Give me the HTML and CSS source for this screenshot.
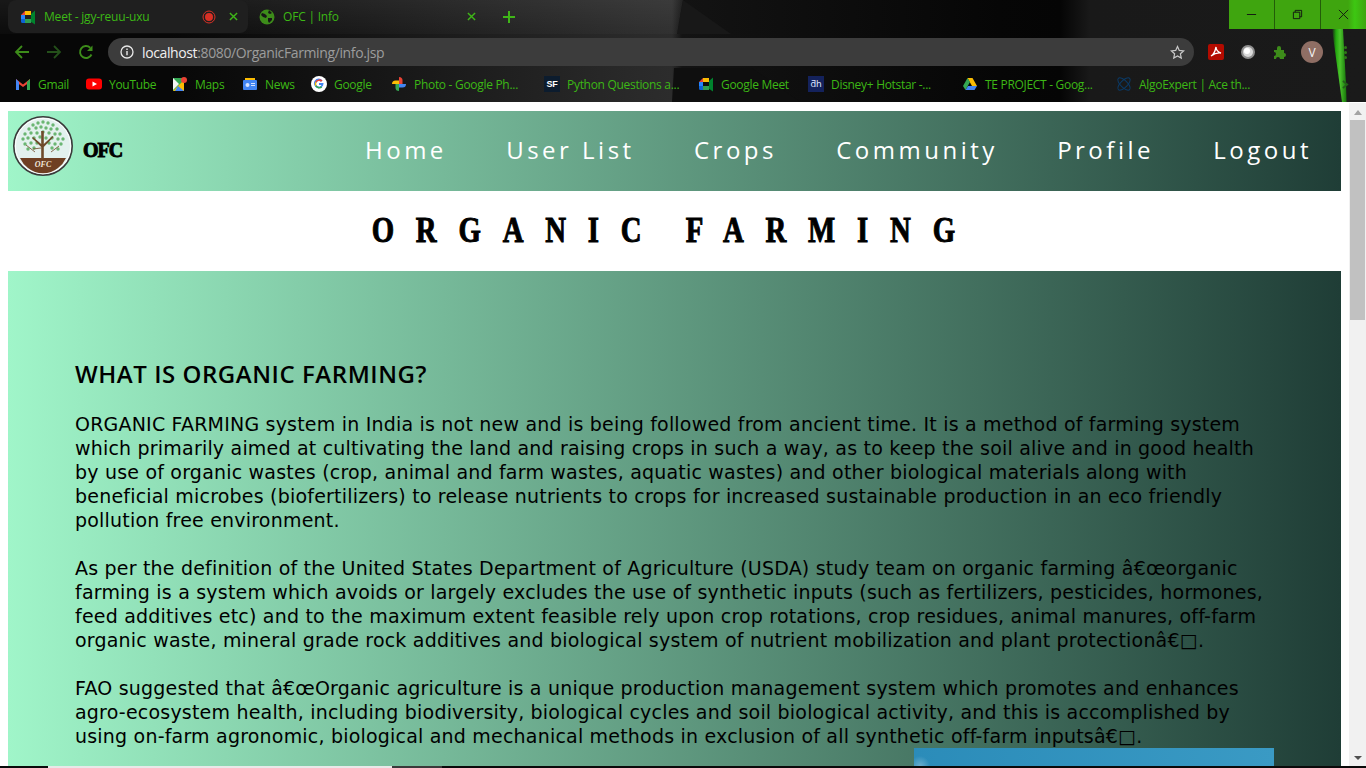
FILE: index.html
```html
<!DOCTYPE html>
<html lang="en">
<head>
<meta charset="utf-8">
<title>OFC | Info</title>
<link rel="stylesheet" href="styles.css">
</head>
<body>
<div class="screen">
  <header class="browser">
    <div class="theme theme-a"></div>
    <div class="theme theme-c"></div>
    <div class="theme theme-b"></div>
    <div class="theme theme-d"></div>
    <div class="theme theme-glow"></div>
    <div class="tabstrip">
      <div class="tab tab-active">
        <svg class="fav" viewBox="0 0 16 16"><path d="M1 6l4-4v4z" fill="#ea4335"/><path d="M5 2h6v4H5z" fill="#fbbc04"/><path d="M1 6h4v4H1z" fill="#2684fc"/><path d="M1 10h4v4H2.500A1.500 1.500 0 0 1 1 12.500z" fill="#0d62d6"/><path d="M5 10h6v4H5z" fill="#2f9e52"/><path d="M11 3.500V13l1 .5 3 2V1.500L11 5z" fill="#00832d"/></svg>
        <span class="tab-title">Meet - jgy-reuu-uxu</span>
        <svg class="rec" viewBox="0 0 14 14"><circle cx="7" cy="7" r="6" fill="none" stroke="#d93025" stroke-width="1"/><circle cx="7" cy="7" r="4" fill="#d93025"/></svg>
        <svg class="tab-x" viewBox="0 0 10 10"><path d="M1 1l8 8M9 1l-8 8" stroke="#3fb618" stroke-width="1.6"/></svg>
      </div>
      <div class="tab tab-idle">
        <svg class="fav" viewBox="0 0 16 16"><circle cx="8" cy="8" r="7.500" fill="#3d8c1a"/><path d="M3 4l3 1 2 2-1 2-3-1-2-2zM10 1l3 3-2 1-2-1zM9 9l4 0 0 2-3 3-1-2z" fill="#161616"/></svg>
        <span class="tab-title">OFC | Info</span>
        <svg class="tab-x" viewBox="0 0 10 10"><path d="M1 1l8 8M9 1l-8 8" stroke="#3fb618" stroke-width="1.6"/></svg>
      </div>
      <svg class="newtab" viewBox="0 0 12 12"><path d="M6 0v12M0 6h12" stroke="#3fb618" stroke-width="2"/></svg>
      <div class="winctl">
        <div class="winbtn"><svg viewBox="0 0 12 12"><path d="M1 6h10" stroke="#111" stroke-width="1"/></svg></div>
        <div class="winbtn"><svg viewBox="0 0 12 12"><path d="M1.500 3.500h7v7h-7zM3.500 3.500v-2h7v7h-2" fill="none" stroke="#111" stroke-width="1"/></svg></div>
        <div class="winbtn"><svg viewBox="0 0 12 12"><path d="M1 1l10 10M11 1L1 11" stroke="#111" stroke-width="1"/></svg></div>
      </div>
    </div>
    <div class="toolbar">
      <svg class="navicon" viewBox="0 0 16 16"><path d="M15 8H2M8 2L2 8l6 6" fill="none" stroke="#3d8c1a" stroke-width="1.800"/></svg>
      <svg class="navicon" viewBox="0 0 16 16"><path d="M1 8h13M8 2l6 6-6 6" fill="none" stroke="#24501a" stroke-width="1.800"/></svg>
      <svg class="navicon" viewBox="0 0 16 16"><path d="M13.500 10.500A6 6 0 1 1 12.200 3.700" fill="none" stroke="#3d8c1a" stroke-width="1.900"/><path d="M14.500 1.500v5.500H9z" fill="#3d8c1a"/></svg>
      <div class="omnibox">
        <svg class="info" viewBox="0 0 14 14"><circle cx="7" cy="7" r="6" fill="none" stroke="#e8e8e8" stroke-width="1.300"/><path d="M7 6v4.200M7 3.600v1.400" stroke="#e8e8e8" stroke-width="1.400"/></svg>
        <span class="url"><b>localhost</b>:8080/OrganicFarming/info.jsp</span>
        <svg class="star" viewBox="0 0 16 16"><path d="M8 1.600l1.900 4.200 4.600.5-3.400 3.100.9 4.500L8 11.600l-4 2.300.9-4.500L1.500 6.300l4.600-.5z" fill="none" stroke="#c9c9c9" stroke-width="1.300"/></svg>
      </div>
      <div class="ext">
        <svg class="ext-icon" viewBox="0 0 16 16"><rect width="16" height="16" rx="2" fill="#b30b00"/><path d="M3 12c2-1 4-4 5-9 0 3 2 5 5 6-3-.5-6 0-10 3z" fill="none" stroke="#fff" stroke-width="1.300"/></svg>
        <svg class="ext-icon" viewBox="0 0 16 16"><circle cx="8" cy="8" r="7" fill="#8e8e8e"/><circle cx="8" cy="8" r="5" fill="#d9d9d9"/><circle cx="7" cy="7" r="3" fill="#fff"/></svg>
        <svg class="ext-icon" viewBox="0 0 16 16"><path d="M2 6h3V4a2 2 0 0 1 4 0v2h3v3a2 2 0 0 1 0 4v2H8a2 2 0 0 0-4 0H2v-3a2 2 0 0 0 0-4z" fill="#3d8c1a"/></svg>
        <span class="avatar">V</span>
        <span class="dots"><i></i><i></i><i></i></span>
      </div>
    </div>
    <nav class="bookmarks">
      <a class="bm bm-gmail"><svg class="fav" viewBox="0 0 16 16"><path d="M1 3l7 5.500L15 3v3L8 11 1 6z" fill="#ea4335"/><path d="M1 3v11h3V6z" fill="#4285f4"/><path d="M15 3v11h-3V6z" fill="#34a853"/></svg>Gmail</a>
      <a class="bm bm-yt"><svg class="fav" viewBox="0 0 16 16"><rect y="2.500" width="16" height="11" rx="3" fill="#f00"/><path d="M6.500 5.500v5L11 8z" fill="#fff"/></svg>YouTube</a>
      <a class="bm bm-maps"><svg class="fav" viewBox="0 0 16 16"><path d="M1 2h11v13H1z" fill="#34a853"/><path d="M1 15L12 4v11z" fill="#fbbc04"/><path d="M6 10l6 5H3z" fill="#4285f4"/><path d="M1 2l6 6-6 6z" fill="#f4f4f4"/><circle cx="12" cy="4" r="3" fill="#ea4335"/></svg>Maps</a>
      <a class="bm bm-news"><svg class="fav" viewBox="0 0 16 16"><path d="M3 2h10v4H3z" fill="#fbbc04"/><rect x="1" y="4" width="14" height="10" rx="1" fill="#4285f4"/><path d="M9 7h4v1H9zM9 9h4v1H9z" fill="#d6e4ff"/><circle cx="5.500" cy="9" r="2" fill="#d6e4ff"/></svg>News</a>
      <a class="bm bm-goog"><svg class="fav" viewBox="0 0 16 16"><circle cx="8" cy="8" r="8" fill="#fff"/><path d="M12.500 7H8v2h2.500A2.800 2.800 0 1 1 10 5.800l1.500-1.400A4.800 4.800 0 1 0 12.500 7z" fill="#4285f4"/><path d="M4.300 5.700A4.800 4.800 0 0 1 11.500 4.400L10 5.800A2.800 2.800 0 0 0 5.500 6.700z" fill="#ea4335"/><path d="M4.300 10.300a4.800 4.800 0 0 1 0-4.600l1.200 1a2.800 2.800 0 0 0 0 2.600z" fill="#fbbc04"/><path d="M4.300 10.300l1.200-1a2.800 2.800 0 0 0 4.400.9l1.400 1.300a4.800 4.800 0 0 1-7-1.200z" fill="#34a853"/></svg>Google</a>
      <a class="bm bm-photo"><svg class="fav" viewBox="0 0 16 16"><path d="M8 8H1a3.500 3.500 0 0 1 3.500-3.500H8z" fill="#fbbc04"/><path d="M8 8V1a3.500 3.500 0 0 1 3.500 3.500V8z" fill="#ea4335"/><path d="M8 8h7a3.500 3.500 0 0 1-3.500 3.500H8z" fill="#4285f4"/><path d="M8 8v7a3.500 3.500 0 0 1-3.500-3.500V8z" fill="#34a853"/></svg>Photo - Google Ph...</a>
      <a class="bm bm-sf"><span class="sf">SF</span>Python Questions a...</a>
      <a class="bm bm-meet"><svg class="fav" viewBox="0 0 16 16"><path d="M1 6l4-4v4z" fill="#ea4335"/><path d="M5 2h6v4H5z" fill="#fbbc04"/><path d="M1 6h4v4H1z" fill="#2684fc"/><path d="M1 10h4v4H2.500A1.500 1.500 0 0 1 1 12.500z" fill="#0d62d6"/><path d="M5 10h6v4H5z" fill="#2f9e52"/><path d="M11 3.500V13l1 .5 3 2V1.500L11 5z" fill="#00832d"/></svg>Google Meet</a>
      <a class="bm bm-hot"><span class="hot">ƌh</span>Disney+ Hotstar -...</a>
      <a class="bm bm-drive"><svg class="fav" viewBox="0 0 16 16"><path d="M5.500 2h5L15 10h-5z" fill="#fbbc04"/><path d="M5.500 2L1 10l2.500 4L8 6z" fill="#34a853"/><path d="M3.500 14h9l2.500-4H6z" fill="#4285f4"/></svg>TE PROJECT - Goog...</a>
      <a class="bm bm-algo"><svg class="fav" viewBox="0 0 16 16"><g fill="none" stroke="#0b3a66" stroke-width="1"><ellipse cx="8" cy="8" rx="8" ry="3.500" transform="rotate(45 8 8)"/><ellipse cx="8" cy="8" rx="8" ry="3.500" transform="rotate(-45 8 8)"/></g></svg>AlgoExpert | Ace th...</a>
      <svg class="bm-more" viewBox="0 0 8 10"><path d="M1 1l5 4-5 4" fill="none" stroke="#24601a" stroke-width="2"/></svg>
    </nav>
  </header>

  <div class="viewport">
    <main class="content">
      <div class="topnav">
        <a class="brand">
          <svg class="logo" viewBox="0 0 60 60">
            <circle cx="30" cy="30" r="29.200" fill="#e3f1ee" stroke="#3a3a3a" stroke-width="1.600"/>
            <circle cx="30" cy="30" r="27.600" fill="none" stroke="#fff" stroke-width="1"/>
            <path d="M7 42h46a25 25 0 0 1-8 10 24 24 0 0 1-30 0 25 25 0 0 1-8-10z" fill="#6f3f22"/>
            <g fill="#6bb673">
              <circle cx="30" cy="6" r="1.700"/><circle cx="25" cy="7" r="1.700"/><circle cx="35" cy="7" r="1.700"/><circle cx="20" cy="9" r="1.700"/><circle cx="40" cy="9" r="1.700"/>
              <circle cx="16" cy="13" r="1.700"/><circle cx="23" cy="12" r="1.700"/><circle cx="28" cy="11" r="1.700"/><circle cx="33" cy="12" r="1.700"/><circle cx="38" cy="13" r="1.700"/><circle cx="44" cy="13" r="1.700"/>
              <circle cx="12" cy="18" r="1.700"/><circle cx="18" cy="17" r="1.700"/><circle cx="24" cy="17" r="1.700"/><circle cx="30" cy="16" r="1.700"/><circle cx="36" cy="17" r="1.700"/><circle cx="42" cy="18" r="1.700"/><circle cx="47" cy="18" r="1.700"/>
              <circle cx="10" cy="23" r="1.700"/><circle cx="15" cy="22" r="1.700"/><circle cx="21" cy="22" r="1.700"/><circle cx="27" cy="21" r="1.700"/><circle cx="33" cy="22" r="1.700"/><circle cx="39" cy="22" r="1.700"/><circle cx="45" cy="23" r="1.700"/><circle cx="50" cy="23" r="1.700"/>
              <circle cx="12" cy="28" r="1.700"/><circle cx="18" cy="27" r="1.700"/><circle cx="24" cy="27" r="1.700"/><circle cx="36" cy="27" r="1.700"/><circle cx="42" cy="28" r="1.700"/><circle cx="48" cy="28" r="1.700"/>
              <circle cx="15" cy="33" r="1.700"/><circle cx="21" cy="32" r="1.700"/><circle cx="39" cy="32" r="1.700"/><circle cx="45" cy="33" r="1.700"/>
            </g>
            <path d="M28.200 43V31L19 22l1-1 8.200 7V15h2.600v13l8.700-8 1 1-9.700 10v12z" fill="#6e4a2a"/>
            <path d="M22 36l-9-7M38 36l8-6M28 32l-8 1" stroke="#6e4a2a" stroke-width=".8" fill="none"/>
            <text x="30" y="51" class="logo-text">OFC</text>
          </svg>
          <span class="brand-name">OFC</span>
        </a>
        <ul class="menu">
          <li>Home</li>
          <li>User List</li>
          <li>Crops</li>
          <li>Community</li>
          <li>Profile</li>
          <li>Logout</li>
        </ul>
      </div>
      <h1 class="site-title"><span class="site-title-text">ORGANIC FARMING</span></h1>
      <section class="panel">
        <h2 class="panel-heading">WHAT IS ORGANIC FARMING?</h2>
        <p class="copy">ORGANIC FARMING system in India is not new and is being followed from ancient time. It is a method of farming system<br>which primarily aimed at cultivating the land and raising crops in such a way, as to keep the soil alive and in good health<br>by use of organic wastes (crop, animal and farm wastes, aquatic wastes) and other biological materials along with<br>beneficial microbes (biofertilizers) to release nutrients to crops for increased sustainable production in an eco friendly<br>pollution free environment.</p>
        <p class="copy">As per the definition of the United States Department of Agriculture (USDA) study team on organic farming â€œorganic<br>farming is a system which avoids or largely excludes the use of synthetic inputs (such as fertilizers, pesticides, hormones,<br>feed additives etc) and to the maximum extent feasible rely upon crop rotations, crop residues, animal manures, off-farm<br>organic waste, mineral grade rock additives and biological system of nutrient mobilization and plant protectionâ€□.</p>
        <p class="copy">FAO suggested that â€œOrganic agriculture is a unique production management system which promotes and enhances<br>agro-ecosystem health, including biodiversity, biological cycles and soil biological activity, and this is accomplished by<br>using on-farm agronomic, biological and mechanical methods in exclusion of all synthetic off-farm inputsâ€□.</p>
        <div class="photo"></div>
      </section>
    </main>
    <div class="scrollbar">
      <span class="arrow arrow-up"></span>
      <span class="thumb"></span>
      <span class="arrow arrow-down"></span>
    </div>
  </div>
  <footer class="taskbar">
    <span class="task task-white"></span>
    <span class="task task-grey"></span>
  </footer>
</div>
</body>
</html>
```
FILE: styles.css
```css
* { box-sizing: border-box; }
html, body { margin: 0; height: 100%; overflow: hidden; }
body { background: #fff; }
.screen { width: 1366px; height: 768px; display: flex; flex-direction: column; overflow: hidden; }

/* browser chrome */
.browser { position: relative; height: 103px; flex: none; background: #0a0a0a; border-bottom: 1px solid #fff; display: flex; flex-direction: column; font-family: "Open Sans", "Noto Sans", sans-serif; color: #3cb815; overflow: hidden; }
.theme { position: absolute; top: 0; bottom: 0; left: 0; right: 0; pointer-events: none; }
.theme-a { background: linear-gradient(90deg, #070707 0, #070707 170px, #1a1a1a 430px, #2a2a2a 640px, #2c2c2c 672px, #131313 682px, #060606 1000px, #050505 1060px, #191919 1090px, #1a1a1a 1366px); }
.theme-c { background: linear-gradient(180deg, rgba(255, 255, 255, .07), rgba(255, 255, 255, 0) 48px); clip-path: polygon(0 0, 683px 0, 677px 34px, 0 34px); }
.theme-b { background: #181818; clip-path: polygon(683px 0, 731px 34px, 677px 34px); }
.theme-d { background: #0f0f0f; clip-path: polygon(752px 68px, 800px 102px, 672px 102px, 674px 68px); }
.theme-glow { background: linear-gradient(90deg, rgba(30, 170, 10, 0) 1332px, #23a80e 1336px, #4cc42c 1340px, #1a7a0c 1346px, rgba(26, 122, 12, 0) 1347px); clip-path: polygon(1332px 29px, 1343px 29px, 1347px 102px, 1342px 102px); }

.tabstrip { position: relative; height: 33px; flex: none; display: flex; align-items: flex-start; }
.tab { height: 33px; display: flex; align-items: center; font-size: 12px; letter-spacing: -0.2px; }
.tab-active { width: 240px; margin-left: 8px; padding: 0 10px 0 12px; background: #1f1f1f; border-radius: 8px; }
.tab-idle { width: 240px; padding: 0 12px 0 11px; }
.fav { width: 16px; height: 16px; flex: none; }
.tab .fav { margin-right: 8px; }
.tab-title { flex: 1; white-space: nowrap; }
.rec { width: 14px; height: 14px; margin-right: 13px; }
.tab-x { width: 9px; height: 9px; }
.newtab { width: 12px; height: 12px; margin: 11px 0 0 15px; }
.winctl { position: absolute; top: 0; right: 0; width: 137px; height: 29px; display: flex; background: #3fa50f; }
.winbtn { flex: 1; display: flex; align-items: center; justify-content: center; border-left: 1px solid #235c09; }
.winbtn:first-child { border-left: 0; }
.winbtn svg { width: 11px; height: 11px; }
.winbtn:last-child { background: linear-gradient(90deg, #3fa50f 60%, #3dc712 75%, #3fa50f); }

.toolbar { position: relative; height: 35px; flex: none; display: flex; align-items: center; padding: 3px 0 0 14px; }
.navicon { width: 16px; height: 16px; margin-right: 16px; }
.omnibox { width: 1086px; height: 28px; margin: 0 0 0 -2px; padding: 0 9px 0 12px; background: #3c3c3c; border-radius: 14px; display: flex; align-items: center; }
.info { width: 14px; height: 14px; margin-right: 8px; flex: none; }
.url { flex: 1; font-size: 14px; color: #9c9c9c; letter-spacing: -0.38px; white-space: nowrap; }
.url b { color: #efefef; font-weight: 400; }
.star { width: 15px; height: 15px; }
.ext { display: flex; align-items: center; margin-left: 14px; }
.ext-icon { width: 16px; height: 16px; margin-right: 16px; }
.avatar { width: 22px; height: 22px; margin: 0 0 0 -3px; border-radius: 50%; background: #8f6e64; color: #f4f4f4; font-size: 12px; display: flex; align-items: center; justify-content: center; }
.dots { display: flex; flex-direction: column; gap: 2px; margin-left: 21px; }
.dots i { display: block; width: 3px; height: 3px; border-radius: 50%; background: #2d7a15; }

.bookmarks { position: relative; height: 32px; flex: none; display: flex; align-items: center; padding-left: 15px; font-size: 12px; }
.bm { position: relative; flex: none; display: flex; align-items: center; gap: 7px; white-space: nowrap; letter-spacing: -0.3px; }
.bm-gmail { width: 71px; }
.bm-yt { width: 86px; }
.bm-maps { width: 70px; }
.bm-news { width: 69px; }
.bm-goog { width: 80px; }
.bm-photo { width: 153px; }
.bm-sf { width: 154px; }
.bm-meet { width: 110px; }
.bm-hot { width: 154px; }
.bm-drive { width: 154px; }
.bm-algo { width: 154px; }
.bm-more { position: absolute; left: 1342px; top: 12px; width: 7px; height: 9px; }
.sf { width: 16px; height: 16px; flex: none; background: #0c1c2e; color: #fff; font: 700 9px "Liberation Sans", sans-serif; display: flex; align-items: center; justify-content: center; }
.hot { width: 16px; height: 16px; flex: none; background: #14225c; color: #dfe6ff; font: 9px "DejaVu Sans", sans-serif; display: flex; align-items: center; justify-content: center; }

/* page */
.viewport { height: 663px; flex: none; display: flex; overflow: hidden; background: #fff; }
.content { width: 1349px; padding: 8px 8px 0; flex: none; overflow: hidden; }
.topnav { height: 80px; display: flex; align-items: center; justify-content: space-between; background: linear-gradient(90deg, #a0f5c9, #1f3d36); padding: 0 29px 0 5px; }
.brand { display: flex; align-items: center; gap: 10px; }
.logo { width: 60px; height: 60px; margin-top: -10px; }
.logo-text { font: italic 700 8px "Liberation Serif", serif; fill: #f0e6da; text-anchor: middle; }
.brand-name { font: 700 20px "Liberation Serif", serif; color: #000; -webkit-text-stroke: 0.9px #000; margin-top: -2px; letter-spacing: -1px; }
.menu { display: flex; gap: 59.3px; margin: 0 0 4px; padding: 0; list-style: none; font: 24px "Open Sans", sans-serif; letter-spacing: 3.5px; color: #fff; }
.site-title { height: 80px; margin: 0; padding-bottom: 2px; display: flex; align-items: center; justify-content: center; color: #000; }
.site-title-text { display: inline-block; transform: scaleX(.8); font: 700 36px "Liberation Serif", serif; -webkit-text-stroke: 1px #000; letter-spacing: 27.25px; word-spacing: -8.5px; white-space: pre; }
.panel { position: relative; height: 520px; padding: 91px 67px 0; background: linear-gradient(90deg, #a0f5c9, #1f3d36); font-family: "DejaVu Sans", sans-serif; color: #000; overflow: hidden; }
.panel-heading { margin: 0 0 26px; font: 600 24px/24px "Open Sans", sans-serif; letter-spacing: .55px; }
.copy { margin: 0 0 24px; font-size: 19px; line-height: 24px; letter-spacing: .2px; white-space: nowrap; }
.photo { position: absolute; left: 906px; top: 477px; width: 360px; height: 60px; background: radial-gradient(circle at 6px 18px, rgba(255, 255, 255, .3), rgba(255, 255, 255, 0) 10px), linear-gradient(90deg, #2b8cb9, #3a9ac4); }

.scrollbar { width: 17px; flex: none; background: #f1f1f1; display: flex; flex-direction: column; align-items: center; position: relative; }
.arrow { width: 0; height: 0; border-left: 4px solid transparent; border-right: 4px solid transparent; }
.arrow-up { margin-top: 7px; border-bottom: 5px solid #a3a3a3; }
.arrow-down { position: absolute; bottom: 6px; border-top: 4px solid #505050; }
.thumb { width: 15px; height: 200px; margin-top: 5px; background: #c1c1c1; }

.taskbar { height: 2px; flex: none; background: #0a0a0a; display: flex; padding-left: 48px; }
.task { height: 2px; display: block; }
.task-white { width: 344px; background: #e8e8e8; }
.task-grey { width: 50px; background: #3a3a3a; }
```
